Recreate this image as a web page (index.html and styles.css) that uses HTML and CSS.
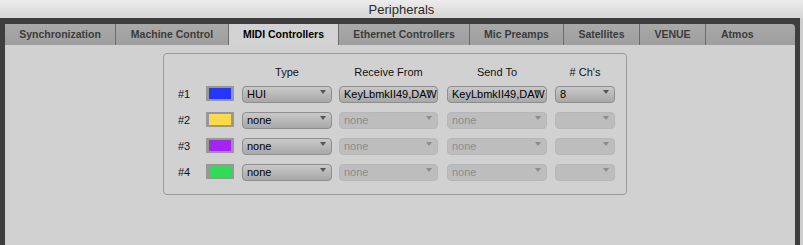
FILE: index.html
```html
<!DOCTYPE html>
<html>
<head>
<meta charset="utf-8">
<title>Peripherals</title>
<link rel="stylesheet" href="styles.css">
</head>
<body>
<div class="window">
  <div class="titlebar">Peripherals</div>
  <div class="frame">
    <div class="tabs">
      <div class="tab t-sync">Synchronization</div>
      <div class="tab t-machine">Machine Control</div>
      <div class="tab t-midi active">MIDI Controllers</div>
      <div class="tab t-eth">Ethernet Controllers</div>
      <div class="tab t-mic">Mic Preamps</div>
      <div class="tab t-sat">Satellites</div>
      <div class="tab t-venue">VENUE</div>
      <div class="tab t-atmos">Atmos</div>
    </div>
    <div class="panel">
      <div class="group">
        <div class="grid">
          <div></div>
          <div></div>
          <div class="head c-type">Type</div>
          <div class="head c-recv">Receive From</div>
          <div class="head c-send">Send To</div>
          <div class="head c-ch">&#35; Ch's</div>

          <div class="num">#1</div>
          <div class="swatch"><span class="fill blue"></span></div>
          <div class="dd c-type">HUI<span class="arrow"></span></div>
          <div class="dd c-recv">KeyLbmkII49,DAW<span class="arrow"></span></div>
          <div class="dd c-send">KeyLbmkII49,DAW<span class="arrow"></span></div>
          <div class="dd c-ch">8<span class="arrow"></span></div>

          <div class="num">#2</div>
          <div class="swatch"><span class="fill yellow"></span></div>
          <div class="dd c-type">none<span class="arrow"></span></div>
          <div class="dd off c-recv">none<span class="arrow"></span></div>
          <div class="dd off c-send">none<span class="arrow"></span></div>
          <div class="dd off c-ch"><span class="arrow"></span></div>

          <div class="num">#3</div>
          <div class="swatch"><span class="fill purple"></span></div>
          <div class="dd c-type">none<span class="arrow"></span></div>
          <div class="dd off c-recv">none<span class="arrow"></span></div>
          <div class="dd off c-send">none<span class="arrow"></span></div>
          <div class="dd off c-ch"><span class="arrow"></span></div>

          <div class="num">#4</div>
          <div class="swatch"><span class="fill green"></span></div>
          <div class="dd c-type">none<span class="arrow"></span></div>
          <div class="dd off c-recv">none<span class="arrow"></span></div>
          <div class="dd off c-send">none<span class="arrow"></span></div>
          <div class="dd off c-ch"><span class="arrow"></span></div>
        </div>
      </div>
    </div>
  </div>
</div>
</body>
</html>
```
FILE: styles.css
```css
html, body {
  margin: 0;
  padding: 0;
}
body {
  width: 803px;
  height: 245px;
  overflow: hidden;
  background: #cdcdcd;
  font-family: "Liberation Sans", Arial, sans-serif;
}
.window {
  width: 803px;
  height: 245px;
  display: flex;
  flex-direction: column;
}
.titlebar {
  height: 18px;
  line-height: 20px;
  text-align: center;
  font-size: 13px;
  color: #2a2a2a;
  background: linear-gradient(#ececec, #d6d6d6);
}
.frame {
  flex: 1;
  width: 800px;
  box-sizing: border-box;
  background: #3e3e3e;
  padding: 6px 5px 0 5px;
  display: flex;
  flex-direction: column;
}
.tabs {
  display: flex;
  height: 21px;
  border-top-right-radius: 4px;
  overflow: hidden;
}
.tab {
  box-sizing: border-box;
  height: 21px;
  line-height: 21px;
  text-align: center;
  font-size: 10.5px;
  font-weight: bold;
  color: #3b3b3b;
  background: linear-gradient(#a9a9a9, #9e9e9e);
  border-left: 1px solid #6c6c6c;
  white-space: nowrap;
}
.tab.t-sync { width: 110px; border-left: none; }
.tab.t-machine { width: 113px; }
.tab.t-midi { width: 110px; }
.tab.t-eth { width: 131px; }
.tab.t-mic { width: 94px; }
.tab.t-sat { width: 76px; }
.tab.t-venue { width: 66px; }
.tab.t-atmos { width: 90px; text-align: left; padding-left: 15px; }
.tab.active {
  background: #d2d2d2;
  color: #000;
}
.panel {
  flex: 1;
  background: #d1d1d1;
  padding-top: 8px;
}
.group {
  width: 464px;
  box-sizing: border-box;
  margin-left: 158px;
  border: 1px solid #9b9b9b;
  border-radius: 4px;
  padding: 11px 0 13px 14px;
}
.grid {
  display: grid;
  grid-template-columns: 28px 36px 97px 108px 108px 60px;
  grid-template-rows: 12px repeat(4, 17px);
  row-gap: 9px;
}
.head {
  font-size: 11px;
  line-height: 14px;
  color: #111;
  text-align: center;
}
.c-type { width: 90px; }
.c-recv { width: 99px; }
.c-send { width: 100px; }
.c-ch { width: 60px; }
.num {
  font-size: 11px;
  line-height: 17px;
  color: #111;
}
.swatch {
  width: 28px;
  height: 15px;
  box-sizing: border-box;
  border-style: solid;
  border-color: #979797;
  border-width: 2px 3px;
  display: flex;
}
.fill { flex: 1; }
.blue { background: #2536ff; }
.yellow { background: #ffd94c; }
.purple { background: #a624f2; }
.green { background: #34d957; }
.dd {
  position: relative;
  box-sizing: border-box;
  height: 17px;
  line-height: 15px;
  padding-left: 4px;
  font-size: 11px;
  color: #000;
  white-space: nowrap;
  overflow: hidden;
  border: 1px solid #8e8e8e;
  border-radius: 4px;
  background: linear-gradient(#c9c9c9, #a8a8a8);
}
.dd.off {
  color: #8d8d8d;
  border-color: #b7b7b7;
  background: #bdbdbd;
}
.arrow {
  position: absolute;
  right: 5px;
  top: 3px;
  width: 0;
  height: 0;
  border-left: 3.5px solid transparent;
  border-right: 3.5px solid transparent;
  border-top: 4px solid #555;
}
.dd.off .arrow {
  border-top-color: #8c8c8c;
}
```
